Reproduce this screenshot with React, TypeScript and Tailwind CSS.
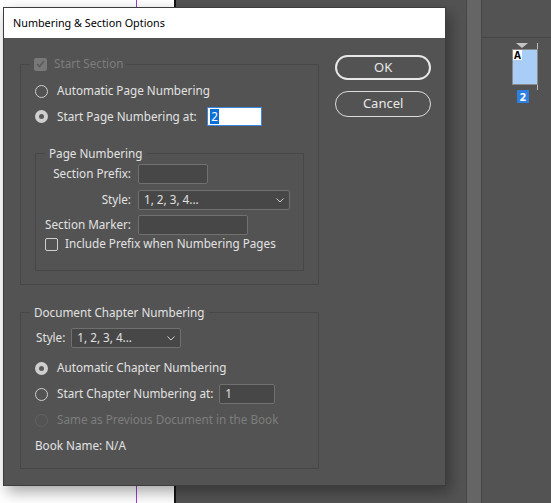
import React from 'react';

const font = { fontFamily: '"Segoe UI", "Noto Sans", "Liberation Sans", sans-serif' };

const Radio: React.FC<{ checked?: boolean; disabled?: boolean }> = ({ checked, disabled }) => {
  if (disabled) {
    return <span className="w-[13px] h-[13px] rounded-full border border-[#636363] shrink-0" />;
  }
  if (checked) {
    return (
      <span className="w-[13px] h-[13px] rounded-full bg-[#cfcfcf] flex items-center justify-center shrink-0">
        <span className="w-[5px] h-[5px] rounded-full bg-[#5a5a5a]" />
      </span>
    );
  }
  return <span className="w-[13px] h-[13px] rounded-full border border-[#cfcfcf] shrink-0" />;
};

const Chevron = () => (
  <svg width="8" height="5" viewBox="0 0 8 5" className="shrink-0">
    <path d="M0.5 0.5 L4 4 L7.5 0.5" fill="none" stroke="#cfcfcf" strokeWidth="1" />
  </svg>
);

const Select: React.FC<{ width: string; value: string }> = ({ width, value }) => (
  <div
    className={`${width} h-[20px] border border-[#707070] bg-[#474747] rounded-[2px] flex items-center justify-between pl-[5px] pr-[5px] text-[#e0e0e0]`}
  >
    <span>{value}</span>
    <Chevron />
  </div>
);

const Field: React.FC<{ width: string; value?: string }> = ({ width, value }) => (
  <div className={`${width} h-[20px] border border-[#707070] bg-[#474747] rounded-[2px] flex items-center pl-[5px] text-[#e0e0e0]`}>
    {value}
  </div>
);

export default function App() {
  return (
    <div className="relative w-[551px] h-[503px] overflow-hidden flex text-[11.7px]" style={font}>
      {/* background: page, pasteboard, scrollbar, pages panel */}
      <div className="w-[174px] h-full bg-white relative shrink-0">
        <div className="absolute left-[136px] top-0 w-px h-full bg-[#9b3fd6]" />
      </div>
      <div className="w-[2px] h-full bg-[#151515] shrink-0" />
      <div className="w-[290px] h-full bg-[#535353] shrink-0" />
      <div className="w-[16px] h-full bg-[#656565] border-x border-[#474747] shrink-0" />
      <div className="flex-1 h-full bg-[#535353] flex flex-col">
        <div className="h-[38px] border-b border-[#464646]" />
        <div className="relative ml-[30px] mt-[5px] w-[27px] flex flex-col">
          <div className="ml-[4px] w-0 h-0 border-l-[6px] border-r-[6px] border-t-[5px] border-l-transparent border-r-transparent border-t-[#c4c4c4]" />
          <div className="absolute left-[25px] top-0 w-px h-[47px] bg-[#bdbdbd]" />
          <div className="mt-[1px] w-[26px] h-[36px] bg-[#a8cdf7] border border-[#8a8a8a] relative">
            <span className="absolute left-0 top-0 bg-white text-black font-bold text-[10px] leading-[10px] px-[1px]">A</span>
          </div>
          <div className="mt-[5px] ml-[5px] w-[12px] h-[13px] bg-[#2d7fe2] text-white font-bold text-[11px] leading-[13px] text-center">2</div>
        </div>
      </div>

      {/* dialog window */}
      <div className="absolute left-[3px] top-[7px] w-[443px] h-[479px] flex flex-col border border-[#3d3d3d] shadow-[4px_6px_14px_rgba(0,0,0,0.35)]">
        <div className="h-[30px] bg-white flex items-center pl-[9px] text-black text-[10.8px]">Numbering &amp; Section Options</div>
        <div className="flex-1 bg-[#535353] flex pl-[16px] pr-[14px] pt-[19px] gap-[16px] text-[#e2e2e2]">
          <div className="flex flex-col w-[300px]">
            <fieldset className="border border-[#474747] pb-[13px]">
              <legend className="ml-[9px] px-[4px] flex items-center gap-[7px] h-[14px] text-[#7d7d7d]">
                <span className="w-[13px] h-[13px] rounded-[2px] bg-[#787878] flex items-center justify-center">
                  <svg width="9" height="8" viewBox="0 0 9 8">
                    <path d="M1 4 L3.5 6.5 L8 1" fill="none" stroke="#5a5a5a" strokeWidth="1.6" />
                  </svg>
                </span>
                Start Section
              </legend>
              <div className="px-[14px] flex flex-col">
                <div className="mt-[10px] h-[20px] flex items-center gap-[9px]">
                  <Radio />
                  <span>Automatic Page Numbering</span>
                </div>
                <div className="mt-[6px] h-[19px] flex items-center">
                  <Radio checked />
                  <span className="ml-[9px]">Start Page Numbering at:</span>
                  <div className="ml-auto mr-[42px] w-[55px] h-[19px] bg-white border border-[#3b86de] flex items-center pl-[2px]">
                    <span className="bg-[#0a6fd6] text-white leading-[15px] px-[1px]">2</span>
                  </div>
                </div>
                <fieldset className="mt-[19px] border border-[#474747] pb-[18px]">
                  <legend className="ml-[9px] px-[4px] h-[16px] leading-[16px]">Page Numbering</legend>
                  <div className="pl-[9px] grid grid-cols-[86px_auto] gap-x-[7px] items-center">
                    <span className="mt-[3px] text-right">Section Prefix:</span>
                    <div className="mt-[3px]"><Field width="w-[70px]" /></div>
                    <span className="mt-[6px] text-right">Style:</span>
                    <div className="mt-[6px]"><Select width="w-[152px]" value="1, 2, 3, 4..." /></div>
                    <span className="mt-[5px] text-right whitespace-nowrap">Section Marker:</span>
                    <div className="mt-[5px]"><Field width="w-[110px]" /></div>
                    <div className="col-span-2 mt-[1px] h-[16px] flex items-center gap-[7px]">
                      <span className="w-[13px] h-[13px] rounded-[2px] border border-[#cfcfcf]" />
                      <span>Include Prefix when Numbering Pages</span>
                    </div>
                  </div>
                </fieldset>
              </div>
            </fieldset>

            <fieldset className="mt-[19px] border border-[#474747] pb-[12px]">
              <legend className="ml-[9px] px-[4px] h-[16px] leading-[16px]">Document Chapter Numbering</legend>
              <div className="px-[14px] flex flex-col">
                <div className="mt-[8px] h-[20px] flex items-center gap-[6px]">
                  <span className="pl-[1px]">Style:</span>
                  <Select width="w-[110px]" value="1, 2, 3, 4..." />
                </div>
                <div className="mt-[10px] h-[20px] flex items-center gap-[9px]">
                  <Radio checked />
                  <span>Automatic Chapter Numbering</span>
                </div>
                <div className="mt-[6px] h-[20px] flex items-center">
                  <Radio />
                  <span className="ml-[9px]">Start Chapter Numbering at:</span>
                  <div className="ml-auto mr-[29px]"><Field width="w-[56px]" value="1" /></div>
                </div>
                <div className="mt-[6px] h-[20px] flex items-center gap-[9px] text-[#7d7d7d]">
                  <Radio disabled />
                  <span>Same as Previous Document in the Book</span>
                </div>
                <div className="mt-[6px] h-[20px] flex items-center">Book Name: N/A</div>
              </div>
            </fieldset>
          </div>

          <div className="flex flex-col w-[96px] gap-[11px] -mt-[2px]">
            <button className="h-[25px] rounded-full border-2 border-[#e8e8e8] text-[#e8e8e8] text-[13px]">OK</button>
            <button className="h-[26px] rounded-full border border-[#dcdcdc] text-[#e8e8e8] text-[13px]">Cancel</button>
          </div>
        </div>
      </div>
    </div>
  );
}
